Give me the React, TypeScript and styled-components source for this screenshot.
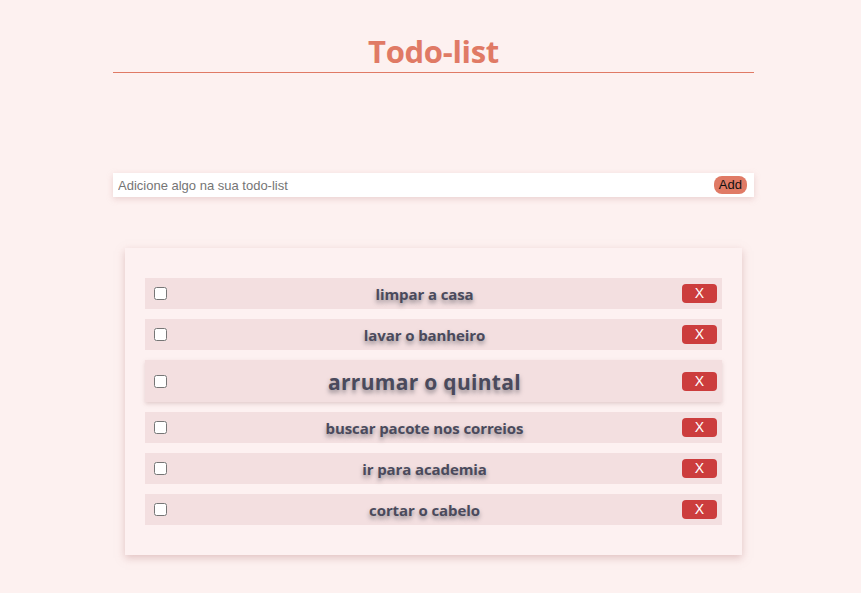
import React from "react";
import styled, { createGlobalStyle } from "styled-components";

const Global = createGlobalStyle`
  html, body { margin: 0; padding: 0; background: #fdf1f0; }
  body { font-family: "Open Sans", "Noto Sans", sans-serif; min-height: 593px; }
`;

const Page = styled.div`
  width: 641px;
  margin-left: 113px;
  padding-top: 30px;
  padding-bottom: 30px;
`;

const Header = styled.header`
  border-bottom: 1px solid #e07a65;
  text-align: center;
`;

const Title = styled.h1`
  margin: 0;
  font-family: "Open Sans", sans-serif;
  font-weight: 700;
  font-size: 31px;
  line-height: 42px;
  color: #e07a65;
  letter-spacing: -0.3px;
`;

const InputBar = styled.form`
  margin-top: 100px;
  display: flex;
  align-items: center;
  height: 24px;
  background: #ffffff;
  box-shadow: 0 2px 6px rgba(200, 150, 150, 0.35);
  padding: 0 7px 0 5px;
`;

const TextInput = styled.input`
  flex: 1;
  border: none;
  outline: none;
  background: transparent;
  font-family: "Liberation Sans", Arial, sans-serif;
  font-size: 13px;
  color: #333;
  padding: 0;
  &::placeholder { color: #757575; }
`;

const AddButton = styled.button`
  border: none;
  background: #e07a65;
  color: #111;
  font-family: "Liberation Sans", Arial, sans-serif;
  font-size: 13px;
  height: 18px;
  padding: 0 5px;
  border-radius: 8px;
  line-height: 18px;
`;

const Card = styled.section`
  margin: 51px 12px 0 12px;
  background: #fdf1f1;
  box-shadow: 0 3px 8px rgba(200, 150, 150, 0.5);
  padding: 30px 20px;
  display: flex;
  flex-direction: column;
  gap: 10px;
`;

const Row = styled.div<{ $hover?: boolean }>`
  display: flex;
  align-items: center;
  height: ${(p) => (p.$hover ? 42 : 31)}px;
  background: #f3dfe0;
  padding: 0 5px 0 9px;
  box-shadow: ${(p) => (p.$hover ? "0 2px 4px rgba(180, 140, 140, 0.35)" : "none")};
`;

const Check = styled.input`
  width: 13px;
  height: 13px;
  margin: 0;
  flex: none;
`;

const Label = styled.span<{ $hover?: boolean }>`
  flex: 1;
  text-align: center;
  font-family: "Open Sans", sans-serif;
  font-weight: 700;
  font-size: ${(p) => (p.$hover ? 21 : 15)}px;
  color: #4a4a5c;
  text-shadow: 0 3px 4px rgba(60, 60, 70, 0.5);
  margin-top: 1px;
  letter-spacing: ${(p) => (p.$hover ? 0.3 : -0.1)}px;
`;

const Remove = styled.button`
  width: 35px;
  height: 19px;
  border: none;
  border-radius: 4px;
  background: #cc3d3d;
  color: #fff;
  font-family: "Liberation Sans", Arial, sans-serif;
  font-size: 14px;
  line-height: 19px;
  padding: 0;
  flex: none;
`;

const items = [
  "limpar a casa",
  "lavar o banheiro",
  "arrumar o quintal",
  "buscar pacote nos correios",
  "ir para academia",
  "cortar o cabelo",
];

export default function App() {
  return (
    <>
      <Global />
      <Page>
        <Header>
          <Title>Todo-list</Title>
        </Header>
        <InputBar onSubmit={(e) => e.preventDefault()}>
          <TextInput placeholder="Adicione algo na sua todo-list" />
          <AddButton type="submit">Add</AddButton>
        </InputBar>
        <Card>
          {items.map((t, i) => (
            <Row key={t} $hover={i === 2}>
              <Check type="checkbox" />
              <Label $hover={i === 2}>{t}</Label>
              <Remove>X</Remove>
            </Row>
          ))}
        </Card>
      </Page>
    </>
  );
}
